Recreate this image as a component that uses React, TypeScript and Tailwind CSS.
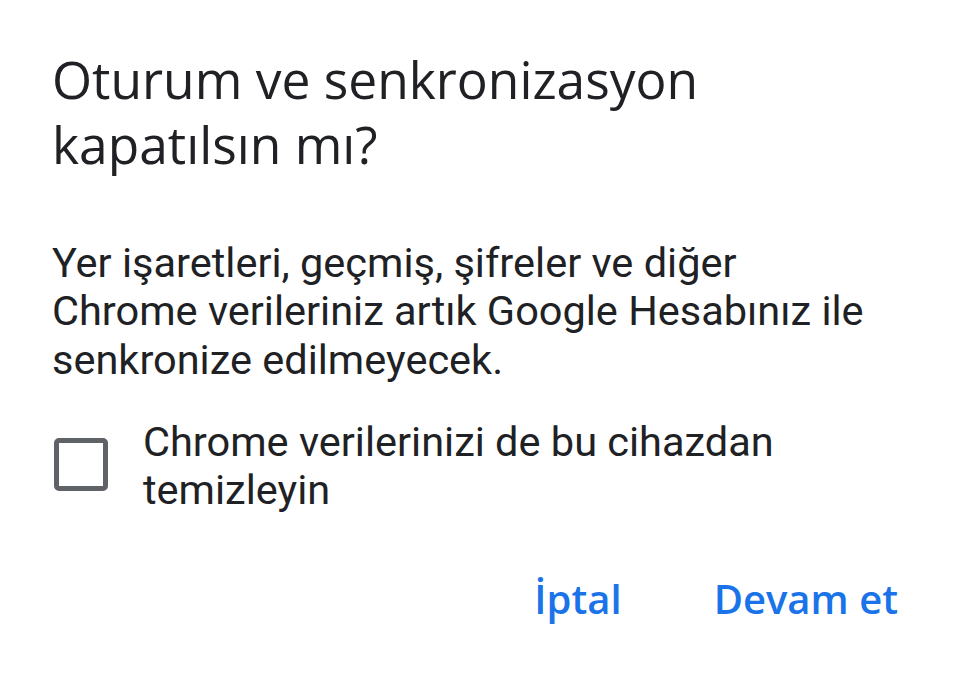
export default function App() {
  return (
    <div className="h-[682px] w-[957px] bg-white text-[#202124]">
      <div className="pl-[52px] pr-[40px] pt-[47px]">
        <h1
          className="text-[51.5px] leading-[65px] font-normal"
          style={{ fontFamily: '"Open Sans", Inter, sans-serif' }}
        >
          Oturum ve senkronizasyon
          <br />
          kapatılsın mı?
        </h1>
        <div style={{ fontFamily: 'Roboto, "Noto Sans", sans-serif' }}>
          <p className="mt-[62px] text-[41.5px] leading-[48.3px]">
            Yer işaretleri, geçmiş, şifreler ve diğer
            <br />
            Chrome verileriniz artık Google Hesabınız ile
            <br />
            senkronize edilmeyecek.
          </p>
          <label className="mt-[34px] flex items-start gap-[35px]">
            <span className="mt-[20px] ml-[2px] block h-[53px] w-[54px] shrink-0 rounded-[5px] border-[5px] border-[#5f6368]" />
            <span className="text-[41.5px] leading-[48.3px]">
              Chrome verilerinizi de bu cihazdan
              <br />
              temizleyin
            </span>
          </label>
        </div>
        <div
          className="mt-[57px] flex justify-end gap-[92px] pr-[19px] text-[40px] leading-[56px] font-semibold text-[#1a73e8]"
          style={{ fontFamily: '"Open Sans", Inter, sans-serif' }}
        >
          <button type="button">İptal</button>
          <button type="button">Devam et</button>
        </div>
      </div>
    </div>
  );
}
